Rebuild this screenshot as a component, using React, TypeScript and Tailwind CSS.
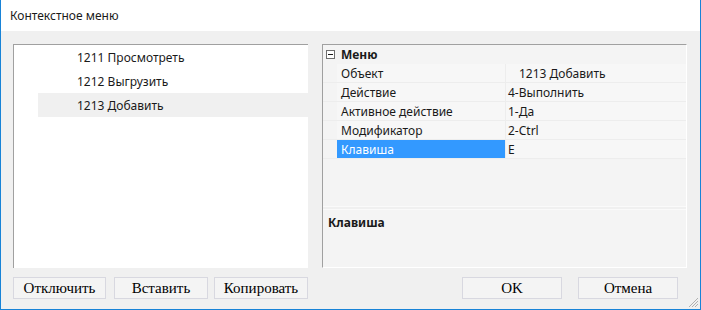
import React from "react";

const ui = { fontFamily: '"Noto Sans", "Segoe UI", sans-serif' };
const serif = { fontFamily: '"Liberation Serif", "Times New Roman", serif' };

function Btn({ label, w }: { label: string; w: string }) {
  return (
    <div
      className={`${w} h-[22px] border border-[#d8d8e0] bg-[#f4f4f4] flex items-center justify-center text-[15px] text-black`}
      style={serif}
    >
      {label}
    </div>
  );
}

function PropRow({
  name,
  value,
  selected,
  indent,
}: {
  name: string;
  value: string;
  selected?: boolean;
  indent?: boolean;
}) {
  return (
    <div className="flex h-[19px] border-b border-[#ededed]">
      <div className="w-[14px] shrink-0 bg-[#f4f4f4]" />
      <div
        className={`w-[168px] shrink-0 pl-[4px] pt-[1px] flex items-center ${
          selected ? "bg-[#3399ff] text-white" : "bg-[#f7f7f7] text-[#1a1a1a]"
        }`}
      >
        {name}
      </div>
      <div className="w-px shrink-0 bg-[#ededed]" />
      <div
        className={`flex-1 bg-[#f7f7f7] pt-[1px] flex items-center text-[#1a1a1a] ${
          indent ? "pl-[13px]" : "pl-[2px]"
        }`}
      >
        {value}
      </div>
    </div>
  );
}

export default function App() {
  return (
    <div
      className="w-[701px] h-[310px] flex flex-col border-l border-r border-b border-[#1883d7] bg-[#f0f0f0] text-[12px]"
      style={ui}
    >
      <div className="h-[31px] bg-white flex items-center pl-[9px] text-[12px] text-[#1a1a1a]">
        Контекстное меню
      </div>
      <div className="flex-1 flex pt-[13px] pl-[12px] gap-[14px]">
        {/* left column */}
        <div className="w-[295px] flex flex-col">
          <div className="h-[224px] bg-white border-l border-t border-[#a0a0a0]">
            <div className="h-[24px] pt-[1px] flex items-center pl-[63px] text-[#1a1a1a]">
              1211 Просмотреть
            </div>
            <div className="h-[24px] pt-[1px] flex items-center pl-[63px] text-[#1a1a1a]">
              1212 Выгрузить
            </div>
            <div className="h-[24px] pt-[1px] flex items-center ml-[24px] pl-[39px] bg-[#f0f0f0] text-[#1a1a1a]">
              1213 Добавить
            </div>
          </div>
          <div className="flex mt-[9px]">
            <Btn label="Отключить" w="w-[94px]" />
            <div className="ml-[8px]">
              <Btn label="Вставить" w="w-[94px]" />
            </div>
            <div className="ml-[6px]">
              <Btn label="Копировать" w="w-[94px]" />
            </div>
          </div>
        </div>
        {/* right column */}
        <div className="w-[365px] flex flex-col">
          <div className="h-[224px] bg-[#f4f4f4] border-l border-t border-[#a0a0a0] border-r border-r-white border-b border-b-white flex flex-col">
            <div className="flex flex-col h-[161px]">
              <div className="h-[19px] flex items-center">
                <div className="w-[14px] flex items-center justify-center">
                  <svg width="9" height="9" viewBox="0 0 9 9">
                    <rect x="0.5" y="0.5" width="8" height="8" fill="white" stroke="#6e6e6e" />
                    <line x1="2" y1="4.5" x2="7" y2="4.5" stroke="#1a1a1a" />
                  </svg>
                </div>
                <div className="pl-[4px] pt-[1px] font-bold text-[#1a1a1a]">Меню</div>
              </div>
              <PropRow name="Объект" value="1213 Добавить" indent />
              <PropRow name="Действие" value="4-Выполнить" />
              <PropRow name="Активное действие" value="1-Да" />
              <PropRow name="Модификатор" value="2-Ctrl" />
              <PropRow name="Клавиша" value="E" selected />
            </div>
            <div className="h-[4px] border-t border-b border-[#fafafa] bg-[#f0f0f0]" />
            <div className="flex-1 pl-[5px] pt-[4px] font-bold text-[#1a1a1a]">Клавиша</div>
          </div>
          <div className="flex mt-[9px] pl-[140px] gap-[16px]">
            <Btn label="OK" w="w-[100px]" />
            <Btn label="Отмена" w="w-[100px]" />
          </div>
        </div>
      </div>
      <div className="relative h-0">
        <svg className="absolute right-[1px] bottom-[1px]" width="11" height="11" viewBox="0 0 11 11">
          <line x1="10" y1="1" x2="1" y2="10" stroke="#b0b0b0" />
          <line x1="10" y1="4" x2="4" y2="10" stroke="#b0b0b0" />
          <line x1="10" y1="7" x2="7" y2="10" stroke="#b0b0b0" />
        </svg>
      </div>
    </div>
  );
}
